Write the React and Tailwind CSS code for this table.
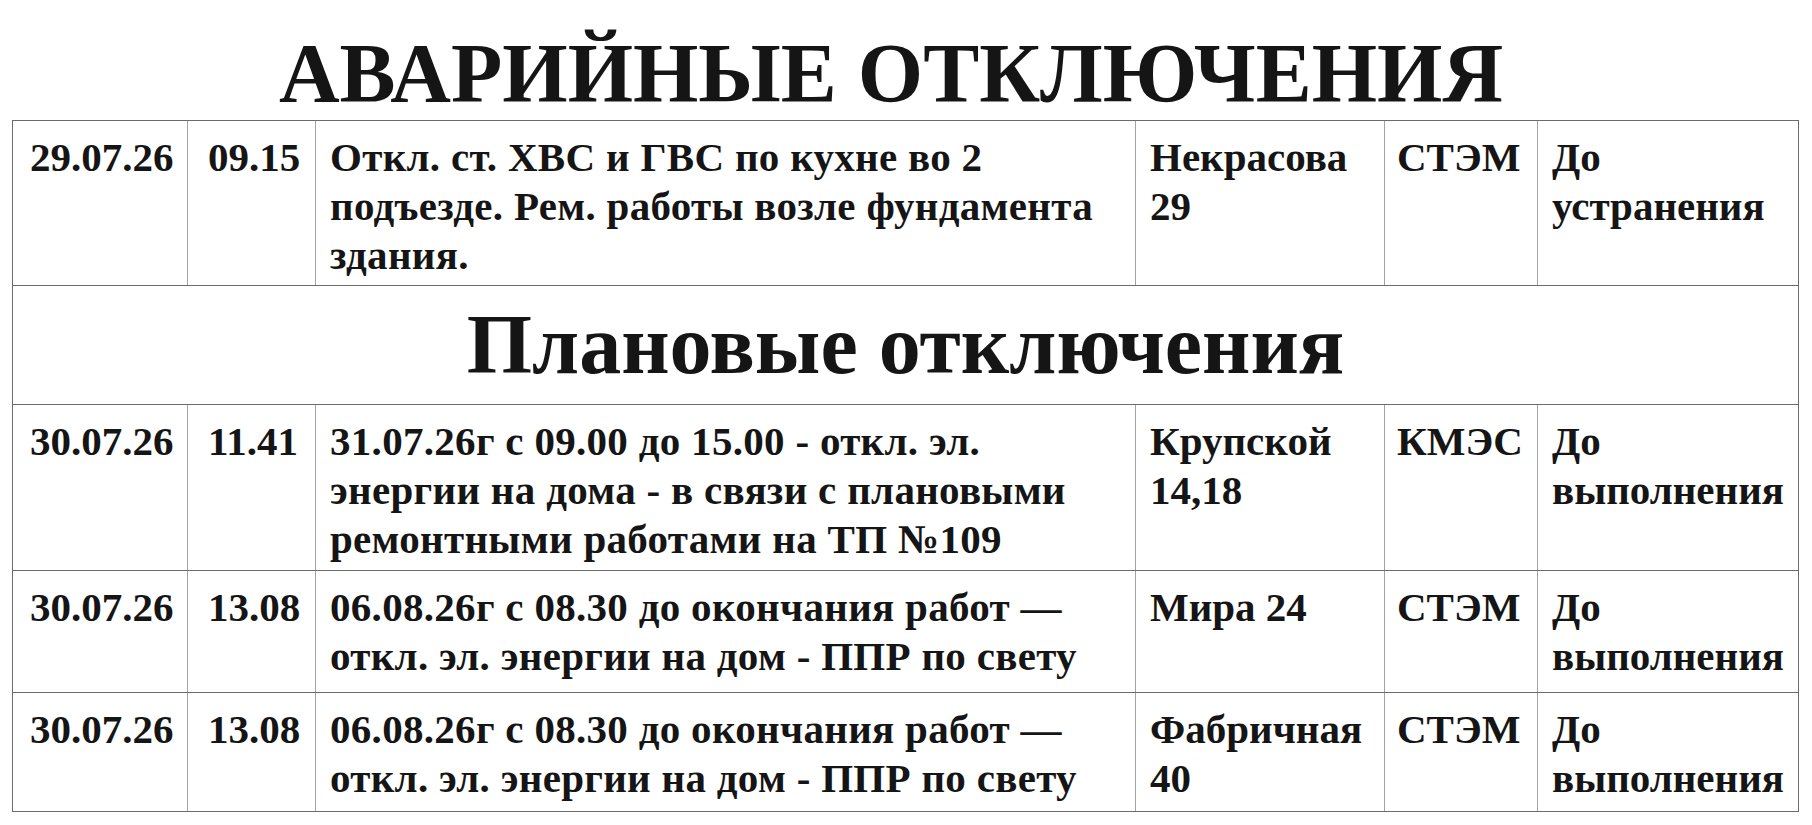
const emergency = [
  {
    date: "29.07.26",
    time: "09.15",
    text: ["Откл. ст. ХВС и ГВС по кухне во 2", "подъезде. Рем. работы возле фундамента", "здания."],
    addr: ["Некрасова", "29"],
    org: "СТЭМ",
    until: ["До", "устранения"],
    h: "h-[165px]",
  },
];

const planned = [
  {
    date: "30.07.26",
    time: "11.41",
    text: ["31.07.26г с 09.00 до 15.00 - откл. эл.", "энергии на дома - в связи с плановыми", "ремонтными работами на ТП №109"],
    addr: ["Крупской", "14,18"],
    org: "КМЭС",
    until: ["До", "выполнения"],
    h: "h-[166px]",
  },
  {
    date: "30.07.26",
    time: "13.08",
    text: ["06.08.26г с 08.30 до окончания работ —", "откл. эл. энергии на дом - ППР по свету"],
    addr: ["Мира 24"],
    org: "СТЭМ",
    until: ["До", "выполнения"],
    h: "h-[122px]",
  },
  {
    date: "30.07.26",
    time: "13.08",
    text: ["06.08.26г с 08.30 до окончания работ —", "откл. эл. энергии на дом - ППР по свету"],
    addr: ["Фабричная", "40"],
    org: "СТЭМ",
    until: ["До", "выполнения"],
    h: "h-[119px]",
  },
];

const Lines = ({ lines }) => (
  <>
    {lines.map((l, i) => (
      <div key={i} className="whitespace-nowrap">
        {l}
      </div>
    ))}
  </>
);

const Row = ({ row }) => (
  <div className={`flex border-b border-[#6b6b6b] ${row.h}`}>
    {/* date */}
    <div className="w-[175px] shrink-0 pl-[17px] pt-[12px] border-r border-[#a3a3a3]">{row.date}</div>
    {/* time */}
    <div className="w-[128px] shrink-0 pl-[20px] pt-[12px] border-r border-[#a3a3a3]">{row.time}</div>
    {/* description */}
    <div className="w-[820px] shrink-0 pl-[14px] pt-[12px] tracking-[0.3px] border-r border-[#a3a3a3]">
      <Lines lines={row.text} />
    </div>
    {/* address */}
    <div className="w-[249px] shrink-0 pl-[14px] pt-[12px] border-r border-[#a3a3a3]">
      <Lines lines={row.addr} />
    </div>
    {/* organisation */}
    <div className="w-[153px] shrink-0 pl-[12px] pt-[12px] border-r border-[#a3a3a3]">{row.org}</div>
    {/* until */}
    <div className="flex-1 pl-[14px] pt-[12px]">
      <Lines lines={row.until} />
    </div>
  </div>
);

export default function App() {
  return (
    <div className="w-[1812px] h-[825px] bg-white text-[#151515] font-['Liberation_Serif','Times_New_Roman',serif] font-bold pt-[32px]">
      {/* main title */}
      <h1 className="text-center text-[84px] leading-none mb-[4px] pr-[30px]">АВАРИЙНЫЕ ОТКЛЮЧЕНИЯ</h1>

      {/* table */}
      <div className="ml-[12px] w-[1787px] border-t border-l border-r border-[#6b6b6b] text-[41px] leading-[49px]">
        {emergency.map((r, i) => (
          <Row key={i} row={r} />
        ))}

        {/* planned header row */}
        <div className="h-[119px] flex items-center justify-center border-b border-[#6b6b6b]">
          <span className="text-[84px] leading-none">Плановые отключения</span>
        </div>

        {planned.map((r, i) => (
          <Row key={i} row={r} />
        ))}
      </div>
    </div>
  );
}
